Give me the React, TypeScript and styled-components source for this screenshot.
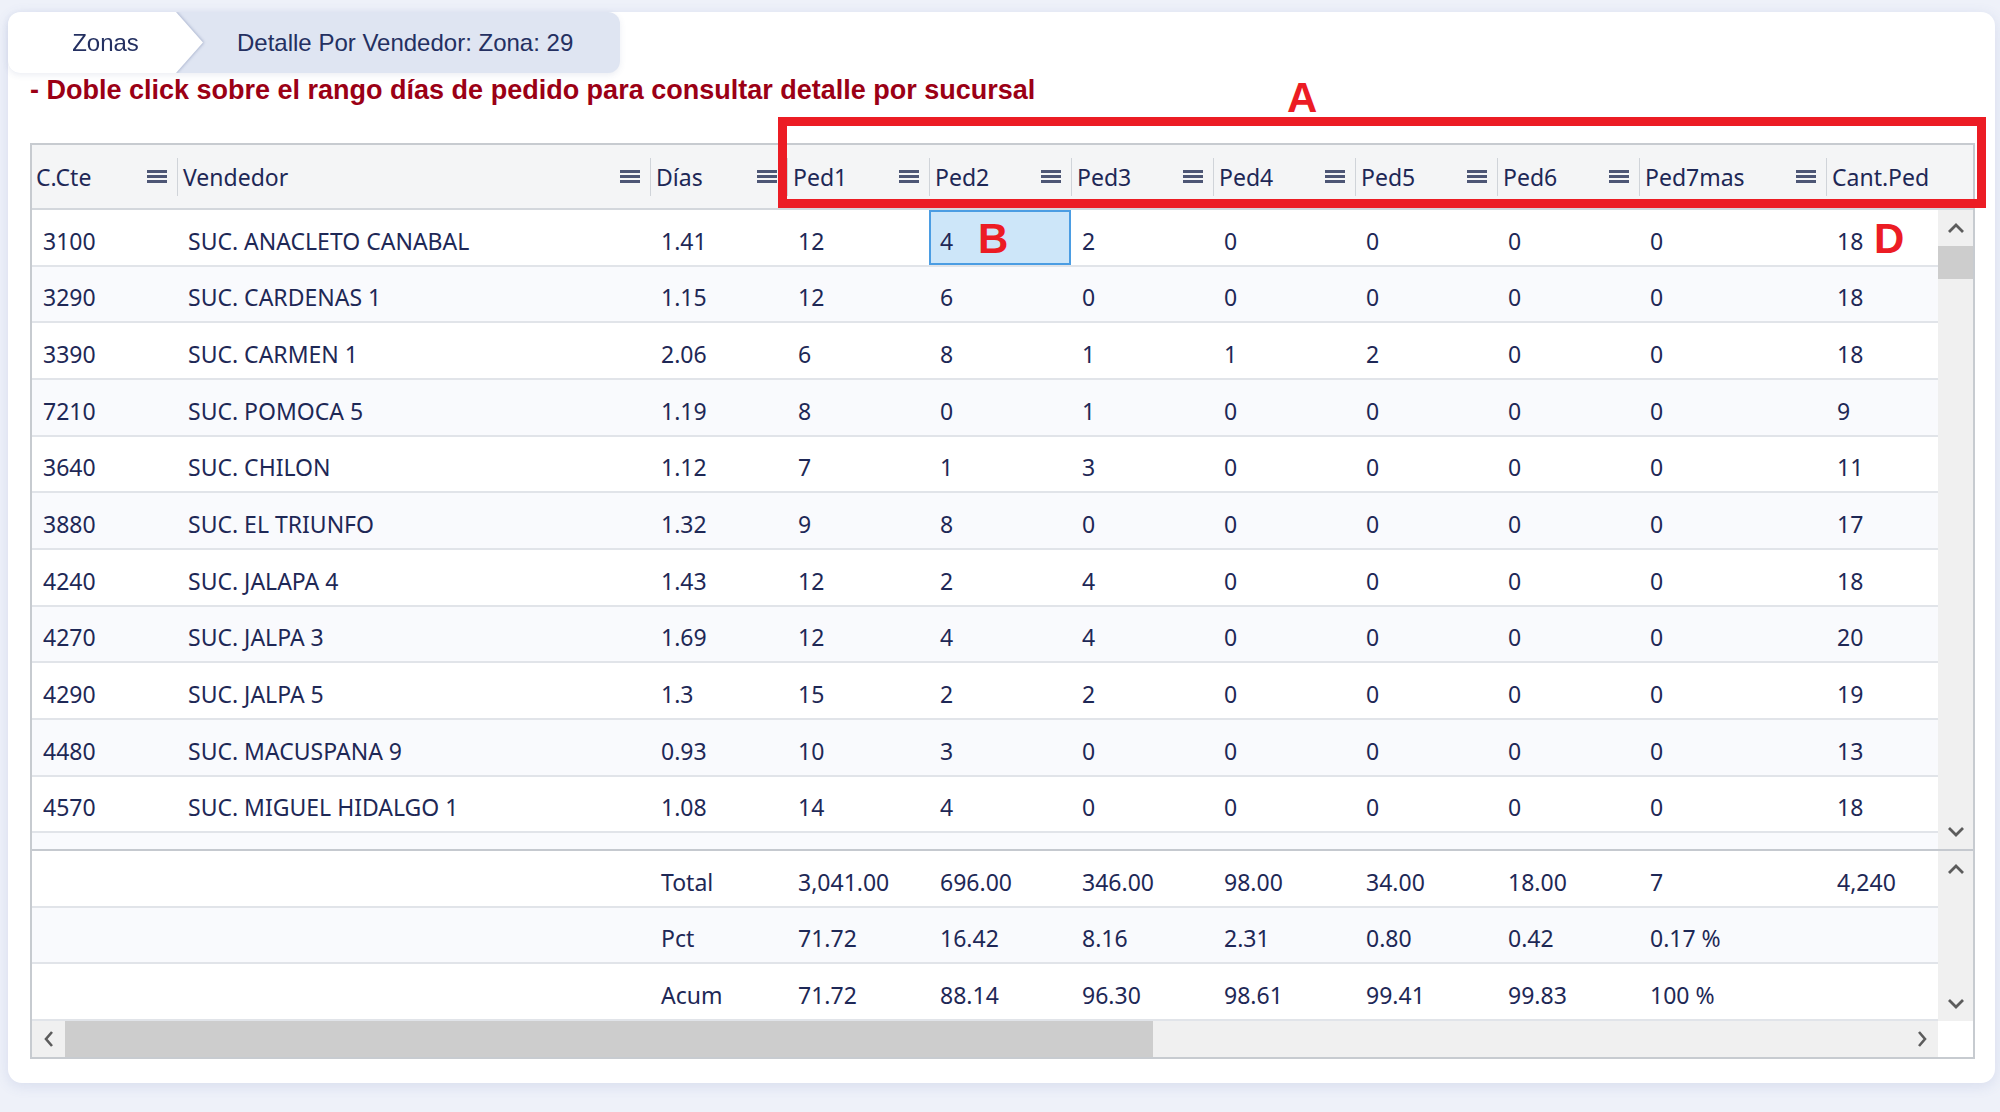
import React from "react";
import styled, { createGlobalStyle } from "styled-components";

const GlobalStyle = createGlobalStyle`
  html, body { margin: 0; padding: 0; }
  body {
    background: #eef1f9;
    font-family: "Noto Sans", "Open Sans", sans-serif;
  }
  * { box-sizing: border-box; }
`;

const COLS = [145, 473, 137, 142, 142, 142, 142, 142, 142, 187, 200];
const HEAD = ["C.Cte", "Vendedor", "Días", "Ped1", "Ped2", "Ped3", "Ped4", "Ped5", "Ped6", "Ped7mas", "Cant.Ped"];

const ROWS: string[][] = [
  ["3100", "SUC. ANACLETO CANABAL", "1.41", "12", "4", "2", "0", "0", "0", "0", "18"],
  ["3290", "SUC. CARDENAS 1", "1.15", "12", "6", "0", "0", "0", "0", "0", "18"],
  ["3390", "SUC. CARMEN 1", "2.06", "6", "8", "1", "1", "2", "0", "0", "18"],
  ["7210", "SUC. POMOCA 5", "1.19", "8", "0", "1", "0", "0", "0", "0", "9"],
  ["3640", "SUC. CHILON", "1.12", "7", "1", "3", "0", "0", "0", "0", "11"],
  ["3880", "SUC. EL TRIUNFO", "1.32", "9", "8", "0", "0", "0", "0", "0", "17"],
  ["4240", "SUC. JALAPA 4", "1.43", "12", "2", "4", "0", "0", "0", "0", "18"],
  ["4270", "SUC. JALPA 3", "1.69", "12", "4", "4", "0", "0", "0", "0", "20"],
  ["4290", "SUC. JALPA 5", "1.3", "15", "2", "2", "0", "0", "0", "0", "19"],
  ["4480", "SUC. MACUSPANA 9", "0.93", "10", "3", "0", "0", "0", "0", "0", "13"],
  ["4570", "SUC. MIGUEL HIDALGO 1", "1.08", "14", "4", "0", "0", "0", "0", "0", "18"],
  ["", "", "", "", "", "", "", "", "", "", ""],
];

const FOOT: string[][] = [
  ["", "", "Total", "3,041.00", "696.00", "346.00", "98.00", "34.00", "18.00", "7", "4,240"],
  ["", "", "Pct", "71.72", "16.42", "8.16", "2.31", "0.80", "0.42", "0.17 %", ""],
  ["", "", "Acum", "71.72", "88.14", "96.30", "98.61", "99.41", "99.83", "100 %", ""],
];

const Page = styled.div`
  padding: 12px 5px 29px 8px;
`;

const Card = styled.div`
  background: #ffffff;
  border-radius: 14px;
  box-shadow: 0 3px 14px rgba(80, 100, 170, 0.14);
  padding-bottom: 24px;
`;

const Breadcrumb = styled.nav`
  display: flex;
  align-items: center;
  width: 612px;
  height: 61px;
  background: #dfe5f2;
  border-radius: 12px;
  overflow: hidden;
  box-shadow: 0 2px 6px rgba(60, 80, 140, 0.1);
  font-family: "Liberation Sans", Arial, sans-serif;
  font-size: 24px;
  color: #243061;
`;

const CrumbShadow = styled.div`
  height: 100%;
  filter: drop-shadow(1px 0 1.5px rgba(40, 60, 120, 0.3));
`;

const CrumbFirst = styled.div`
  width: 195px;
  height: 100%;
  display: flex;
  align-items: center;
  justify-content: center;
  background: #ffffff;
  clip-path: polygon(0 0, 168px 0, 100% 50%, 168px 100%, 0 100%);
`;

const CrumbCurrent = styled.span`
  margin-left: 34px;
`;

const Content = styled.div`
  padding: 0 20px 0 22px;
`;

const Hint = styled.p`
  margin: 2px 0 38px;
  font-family: "Liberation Sans", Arial, sans-serif;
  font-weight: bold;
  font-size: 27px;
  line-height: 30px;
  color: #9b0015;
`;

const GridWrap = styled.div`
  position: relative;
`;

const Grid = styled.div`
  width: 1945px;
  height: 916px;
  border: 2px solid #c7cbd0;
  display: flex;
  flex-direction: column;
  overflow: hidden;
  color: #1e2856;
  font-size: 23px;
`;

const HeaderRow = styled.div`
  display: flex;
  flex: none;
  height: 65px;
  background: #f4f5f6;
  border-bottom: 2px solid #d3d7dc;
`;

const HeaderCell = styled.div<{ $w: number; $first?: boolean }>`
  position: relative;
  flex: none;
  width: ${(p) => p.$w}px;
  display: flex;
  align-items: center;
  justify-content: space-between;
  padding: 0 10px 0 ${(p) => (p.$first ? 4 : 6)}px;
  white-space: nowrap;
  &::before {
    content: "";
    display: ${(p) => (p.$first ? "none" : "block")};
    position: absolute;
    left: 0;
    top: 13px;
    bottom: 12px;
    width: 1px;
    background: #d0d4d9;
  }
`;

const MenuIcon = () => (
  <svg width="20" height="13" viewBox="0 0 20 13">
    <rect x="0" y="0" width="20" height="3" fill="#4d5675" />
    <rect x="0" y="5" width="20" height="3" fill="#4d5675" />
    <rect x="0" y="10" width="20" height="3" fill="#4d5675" />
  </svg>
);

const Body = styled.div`
  display: flex;
  flex: none;
  height: 641px;
  border-bottom: 2px solid #c5c9cf;
`;

const Footer = styled.div`
  display: flex;
  flex: none;
  height: 170px;
`;

const RowsArea = styled.div`
  flex: 1;
  overflow: hidden;
`;

const Row = styled.div<{ $alt: boolean }>`
  display: flex;
  width: max-content;
  height: 56.67px;
  background: ${(p) => (p.$alt ? "#f9fafd" : "#ffffff")};
  border-bottom: 2px solid #e1e4e9;
`;

const Cell = styled.div<{ $w: number; $selected?: boolean }>`
  flex: none;
  width: ${(p) => p.$w}px;
  display: flex;
  align-items: center;
  padding: 7px 0 0 11px;
  white-space: nowrap;
  background: ${(p) => (p.$selected ? "#cde6f9" : "transparent")};
  box-shadow: ${(p) => (p.$selected ? "inset 0 0 0 2px #4b9de3" : "none")};
`;

const VScroll = styled.div`
  flex: none;
  width: 35px;
  display: flex;
  flex-direction: column;
  background: #f0f0f0;
`;

const VButton = styled.div`
  flex: none;
  height: 36px;
  display: flex;
  align-items: center;
  justify-content: center;
`;

const VThumb = styled.div`
  flex: none;
  height: 33px;
  background: #cdcdcd;
`;

const Spacer = styled.div`
  flex: 1;
`;

const HScroll = styled.div`
  display: flex;
  flex: none;
  height: 36px;
  background: #f0f0f0;
`;

const HButton = styled.div`
  flex: none;
  width: 33px;
  display: flex;
  align-items: center;
  justify-content: center;
`;

const HThumb = styled.div`
  flex: none;
  width: 1088px;
  background: #cdcdcd;
`;

const Corner = styled.div`
  flex: none;
  width: 35px;
  background: #ffffff;
`;

const Highlight = styled.div`
  position: absolute;
  left: 748px;
  top: -26px;
  width: 1208px;
  height: 91px;
  border: 9px solid #ec1c24;
  pointer-events: none;
`;

const Mark = styled.span<{ $x: number; $y: number }>`
  position: absolute;
  left: ${(p) => p.$x}px;
  top: ${(p) => p.$y}px;
  font-family: "Liberation Sans", Arial, sans-serif;
  font-weight: bold;
  font-size: 42px;
  line-height: 42px;
  color: #ec1c24;
  pointer-events: none;
`;

const Chevron = ({ dir }: { dir: "up" | "down" | "left" | "right" }) => {
  if (dir === "up" || dir === "down") {
    const pts = dir === "up" ? "2,11 9,4 16,11" : "2,4 9,11 16,4";
    return (
      <svg width="18" height="15" viewBox="0 0 18 15">
        <polyline points={pts} fill="none" stroke="#5c5c5c" strokeWidth="2.8" />
      </svg>
    );
  }
  const pts = dir === "left" ? "9,2 3,9 9,16" : "3,2 9,9 3,16";
  return (
    <svg width="12" height="18" viewBox="0 0 12 18">
      <polyline points={pts} fill="none" stroke="#5c5c5c" strokeWidth="2.6" />
    </svg>
  );
};

export default function App() {
  return (
    <>
      <GlobalStyle />
      <Page>
        <Card>
          <Breadcrumb>
            <CrumbShadow>
              <CrumbFirst>Zonas</CrumbFirst>
            </CrumbShadow>
            <CrumbCurrent>Detalle Por Vendedor: Zona: 29</CrumbCurrent>
          </Breadcrumb>
          <Content>
            <Hint>- Doble click sobre el rango días de pedido para consultar detalle por sucursal</Hint>
            <GridWrap>
              <Grid>
                <HeaderRow>
                  {HEAD.map((h, i) => (
                    <HeaderCell key={h} $w={COLS[i]} $first={i === 0}>
                      <span>{h}</span>
                      <MenuIcon />
                    </HeaderCell>
                  ))}
                </HeaderRow>
                <Body>
                  <RowsArea>
                    {ROWS.map((r, ri) => (
                      <Row key={ri} $alt={ri % 2 === 1}>
                        {r.map((v, ci) => (
                          <Cell key={ci} $w={COLS[ci]} $selected={ri === 0 && ci === 4}>
                            {v}
                          </Cell>
                        ))}
                      </Row>
                    ))}
                  </RowsArea>
                  <VScroll>
                    <VButton>
                      <Chevron dir="up" />
                    </VButton>
                    <VThumb />
                    <Spacer />
                    <VButton>
                      <Chevron dir="down" />
                    </VButton>
                  </VScroll>
                </Body>
                <Footer>
                  <RowsArea>
                    {FOOT.map((r, ri) => (
                      <Row key={ri} $alt={ri % 2 === 1}>
                        {r.map((v, ci) => (
                          <Cell key={ci} $w={COLS[ci]}>
                            {v}
                          </Cell>
                        ))}
                      </Row>
                    ))}
                  </RowsArea>
                  <VScroll>
                    <VButton>
                      <Chevron dir="up" />
                    </VButton>
                    <Spacer />
                    <VButton>
                      <Chevron dir="down" />
                    </VButton>
                  </VScroll>
                </Footer>
                <HScroll>
                  <HButton>
                    <Chevron dir="left" />
                  </HButton>
                  <HThumb />
                  <Spacer />
                  <HButton>
                    <Chevron dir="right" />
                  </HButton>
                  <Corner />
                </HScroll>
              </Grid>
              <Highlight />
              <Mark $x={1257} $y={-66}>A</Mark>
              <Mark $x={948} $y={75}>B</Mark>
              <Mark $x={1844} $y={75}>D</Mark>
            </GridWrap>
          </Content>
        </Card>
      </Page>
    </>
  );
}
